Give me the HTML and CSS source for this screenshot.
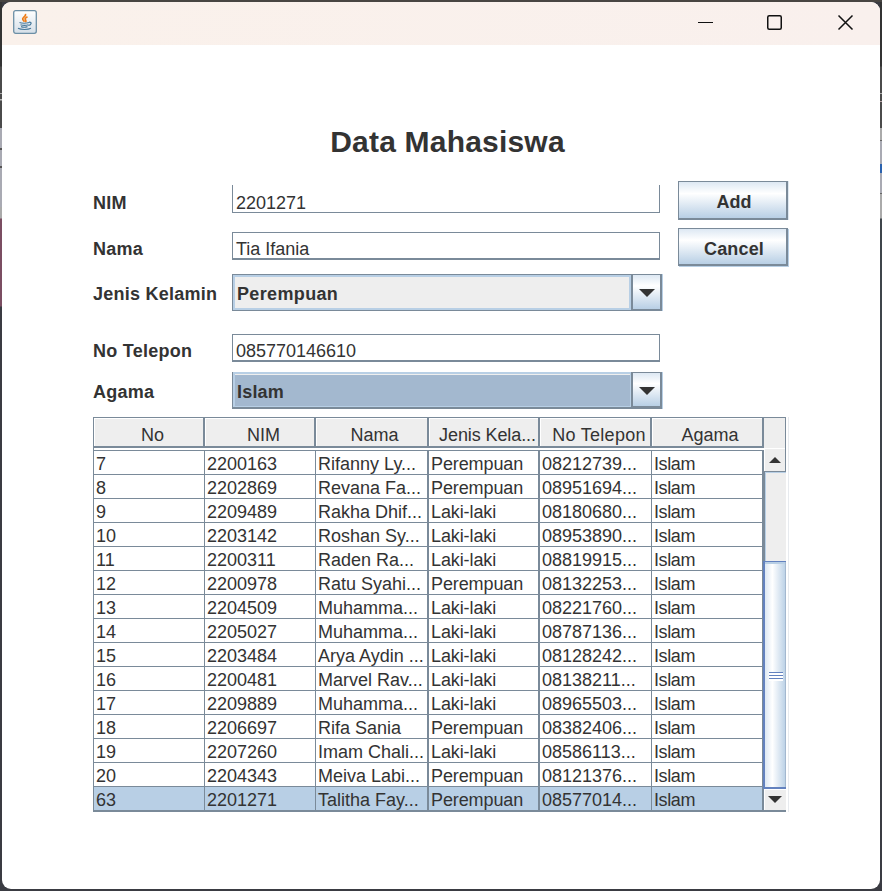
FILE: index.html
```html
<!DOCTYPE html>
<html lang="id">
<head>
<meta charset="utf-8">
<title>Data Mahasiswa</title>
<link rel="stylesheet" href="styles.css">
</head>
<body>
<div class="window">
  <header class="titlebar">
    <svg class="java" width="24" height="24" viewBox="0 0 24 24" fill="none">
      <defs><linearGradient id="tile" x1="0" y1="0" x2="0" y2="1"><stop offset="0" stop-color="#fff"/><stop offset="1" stop-color="#d5dfe8"/></linearGradient></defs>
      <rect x=".7" y=".7" width="22.6" height="22.6" rx="2" fill="url(#tile)" stroke="#6c8fa6" stroke-width="1.3"/>
      <path d="M12.3 4c1.500 2.300-3.800 3.300-2.500 5.500l1.700 2.300M14.500 6.800c-3.300 1.700-2.500 2.300-1.700 3.500.4.7 0 1.300-.5 1.700" stroke="#ee7d18" stroke-width="1.700"/>
      <path d="M6.500 12.500c2 1 7 1 9.500 0M7.500 14.800c2.300.8 5.500.8 8 0M8 16.600c2 .8 4.500.8 6.500 0M16 12.300c3.300-.7 2.500 2.700-.5 3.200M5 18.300c3 1.600 10 1.600 13 0" stroke="#497a9c" stroke-width="1.200"/>
    </svg>
    <svg class="controls" width="160" height="18" viewBox="0 0 160 18" fill="none" stroke="#111" stroke-width="1.500">
      <path d="M0 9.500h15" stroke-width="1"/>
      <rect x="69.750" y="2.750" width="13.500" height="13.500" rx="1.500"/>
      <path d="M140.500 2.500l14 14M154.500 2.500l-14 14"/>
    </svg>
  </header>
  <main class="content">
    <h1>Data Mahasiswa</h1>
    <div class="form">
      <label>NIM</label><div class="field first">2201271</div><button>Add</button>
      <label>Nama</label><div class="field">Tia Ifania</div><button class="cancel">Cancel</button>
      <label class="tight">Jenis Kelamin</label><div class="combo"><span>Perempuan</span><i><svg width="16" height="8"><path d="M0 0h16l-8 8z"/></svg></i></div><b></b>
      <label>No Telepon</label><div class="field">085770146610</div><b></b>
      <label class="agama">Agama</label><div class="combo active"><span>Islam</span><i><svg width="16" height="8"><path d="M0 0h16l-8 8z"/></svg></i></div><b></b>
    </div>
    <div class="pane">
      <div class="table">
        <div class="row head"><span>No</span><span>NIM</span><span>Nama</span><span>Jenis Kela...</span><span>No Telepon</span><span>Agama</span></div>
        <div class="row"><span>7</span><span>2200163</span><span>Rifanny Ly...</span><span>Perempuan</span><span>08212739...</span><span>Islam</span></div>
        <div class="row"><span>8</span><span>2202869</span><span>Revana Fa...</span><span>Perempuan</span><span>08951694...</span><span>Islam</span></div>
        <div class="row"><span>9</span><span>2209489</span><span>Rakha Dhif...</span><span>Laki-laki</span><span>08180680...</span><span>Islam</span></div>
        <div class="row"><span>10</span><span>2203142</span><span>Roshan Sy...</span><span>Laki-laki</span><span>08953890...</span><span>Islam</span></div>
        <div class="row"><span>11</span><span>2200311</span><span>Raden Ra...</span><span>Laki-laki</span><span>08819915...</span><span>Islam</span></div>
        <div class="row"><span>12</span><span>2200978</span><span>Ratu Syahi...</span><span>Perempuan</span><span>08132253...</span><span>Islam</span></div>
        <div class="row"><span>13</span><span>2204509</span><span>Muhamma...</span><span>Laki-laki</span><span>08221760...</span><span>Islam</span></div>
        <div class="row"><span>14</span><span>2205027</span><span>Muhamma...</span><span>Laki-laki</span><span>08787136...</span><span>Islam</span></div>
        <div class="row"><span>15</span><span>2203484</span><span>Arya Aydin ...</span><span>Laki-laki</span><span>08128242...</span><span>Islam</span></div>
        <div class="row"><span>16</span><span>2200481</span><span>Marvel Rav...</span><span>Laki-laki</span><span>08138211...</span><span>Islam</span></div>
        <div class="row"><span>17</span><span>2209889</span><span>Muhamma...</span><span>Laki-laki</span><span>08965503...</span><span>Islam</span></div>
        <div class="row"><span>18</span><span>2206697</span><span>Rifa Sania</span><span>Perempuan</span><span>08382406...</span><span>Islam</span></div>
        <div class="row"><span>19</span><span>2207260</span><span>Imam Chali...</span><span>Laki-laki</span><span>08586113...</span><span>Islam</span></div>
        <div class="row"><span>20</span><span>2204343</span><span>Meiva Labi...</span><span>Perempuan</span><span>08121376...</span><span>Islam</span></div>
        <div class="row selected"><span>63</span><span>2201271</span><span>Talitha Fay...</span><span>Perempuan</span><span>08577014...</span><span>Islam</span></div>
      </div>
      <div class="scroll">
        <div class="corner"></div>
        <div class="arrow up"><svg width="12" height="6"><path d="M0 6l6-6 6 6z"/></svg></div>
        <div class="track"></div>
        <div class="thumb"><div class="grip"></div></div>
        <div class="arrow down"><svg width="14" height="7"><path d="M0 0h14l-7 7z"/></svg></div>
      </div>
    </div>
  </main>
</div>
</body>
</html>
```
FILE: styles.css
```css
* { box-sizing: border-box; }
html { background: #3a3b42; }
body {
  margin: 0;
  padding: 2px;
  width: 882px;
  height: 891px;
  overflow: hidden;
  font: 18px/24px "Liberation Sans", Arial, sans-serif;
  color: #333;
  background:
    linear-gradient(#484542, #484542) 0 0 / 100% 2px no-repeat,
    linear-gradient(#333 66px, #4b4b4b 67px 93px, #aaa 93px 94px, #4b4b4b 94px 99px, #bbb 99px 100px, #4b4b4b 101px 128px, #a9aab3 128px 148px, #555 148px 150px, #a9aab3 150px 166px, #555 166px 168px, #a9aab3 168px 207px, #aaa 207px 218px, #7b4e62 219px 306px, #3a3b42 307px) 0 0 / 2px 100% no-repeat,
    linear-gradient(#333 66px, #4b4b4b 67px 93px, #aaa 93px 94px, #4b4b4b 94px 101px, #b9a5a8 101px 102px, #4b4b4b 102px 128px, #aaa 128px 140px, #666 140px 141px, #a9aab3 141px 164px, #2b62ae 164px 173px, #a9aab3 173px 193px, #666 193px 194px, #aaa 194px 218px, #3f454b 219px 310px, #3a3b42) 100% 0 / 2px 100% no-repeat,
    #3a3b42;
}
.window {
  height: 887px;
  background: #fff;
  border-radius: 9px;
  overflow: hidden;
}
.titlebar {
  height: 43px;
  background: linear-gradient(90deg, #faf1eb, #f9f0ed);
  display: flex;
  justify-content: space-between;
  padding: 8px 22px 0 11px;
}
.controls { margin: 3px 0 0; }
.content { padding: 0 0 0 91px; }
h1 {
  margin: 0;
  padding-top: 79px;
  width: 709px;
  height: 136px;
  text-align: center;
  font-size: 30px;
  line-height: 36px;
  letter-spacing: .2px;
}
.form {
  display: grid;
  grid-template-columns: 139px 446px 111px;
  grid-template-rows: 47px 46px 60px 38px 45px;
}
label {
  font-weight: bold;
  letter-spacing: .25px;
  padding-top: 10px;
}
.form label:nth-of-type(2) { padding-top: 9px; }
label.tight { padding-top: 8px; }
.form label:nth-of-type(4) { padding-top: 5px; }
label.agama { padding-top: 8px; }
.field {
  width: 428px;
  height: 28px;
  margin-top: 4px;
  padding: 4px 3px 0;
  border: 1px solid #7a8a99;
  border-bottom-width: 2px;
}
.form .field:nth-of-type(4) { margin-top: 0; }
.field.first { border-top: 0; border-bottom-width: 1px; padding-top: 6px; }
button {
  width: 110px;
  height: 39px;
  padding: 5px 0 0 3px;
  font: bold 18px "Liberation Sans", Arial, sans-serif;
  color: #333;
  border: 1px solid #7a8a99;
  border-right: 2px solid #7a8a99;
  border-bottom: 2px solid #7a8a99;
  box-shadow: 1px 0 #dfe9f2;
  background: linear-gradient(#dde8f3, #fff 32%, #b8cfe5);
}
button.cancel { box-shadow: 1px 1px #b8cfe5; height: 38px; letter-spacing: .15px; }
.combo {
  display: flex;
  width: 430px;
  height: 37px;
  border: 1px solid #7a8a99;
  box-shadow: 1px 0 #b8cfe5;
}
.combo span {
  flex: 1;
  font-weight: bold;
  letter-spacing: .35px;
  border: 2px solid #b8cfe5;
  background: #eee;
  padding: 5px 2px 0;
}
.combo i {
  width: 30px;
  border: solid #7a8a99;
  border-width: 0 1px 1px 2px;
  background: linear-gradient(#dde8f3, #fff 32%, #b8cfe5);
  display: flex;
  align-items: center;
  justify-content: center;
  padding: 2px 0 0 1px;
}
.combo path, .arrow path { fill: #333; }
.combo.active { border-bottom-width: 2px; }
.combo.active span {
  margin-top: -1px;
  background: #a3b8cf;
  border-width: 2px 1px 1px 2px;
  box-shadow: inset 0 1px #eee;
  padding-top: 6px;
  letter-spacing: .2px;
}
.pane {
  display: flex;
  width: 696px;
  height: 395px;
  border-right: 1px solid #e7eaee;
}
.table {
  width: 671px;
  border: 1px solid #7a8a99;
  border-width: 1px 0 1px 1px;
  height: 395px;
}
.row {
  display: grid;
  grid-template-columns: 111px 111px 113px 111px 112px 112px;
  height: 24px;
}
.row span {
  border-right: 1px solid #7a8a99;
  border-bottom: 1px solid #7a8a99;
  padding-left: 2px;
  line-height: 26px;
  height: 24px;
  white-space: nowrap;
}
.row span:nth-child(3), .row span:nth-child(4), .row span:nth-child(6) { border-right-width: 2px; }
.row:not(.head) span:nth-child(4) { letter-spacing: -.1px; }
.row:not(.head) span:nth-child(6) { letter-spacing: -.4px; }
.head { height: 33px; border-bottom: 1px solid #7a8a99; }
.row.head span {
  height: 30px;
  line-height: 34px;
  text-align: center;
  padding-left: 8px;
  background: #eee;
  border-right-width: 2px;
  border-bottom-width: 2px;
  box-shadow: inset 1px 1px #fff;
}
.row.head span:nth-child(3), .row.head span:nth-child(6) { padding-left: 6px; }
.row.head span:nth-child(4) { letter-spacing: -.1px; }
.row.head span:nth-child(5) { letter-spacing: .3px; }
.selected { background: #b8cfe5; }
.scroll {
  width: 22px;
  border-top: 1px solid #7a8a99;
  border-bottom: 2px solid #7a8a99;
}
.corner { height: 30px; background: #eee; border-right: 1px solid #7a8a99; }
.arrow {
  display: flex;
  align-items: center;
  justify-content: center;
  background: #eee;
  box-shadow: inset 1px 1px #fff;
}
.up { height: 24px; border-right: 1px solid #7a8a99; border-bottom: 1px solid #7a8a99; }
.track { height: 89px; background: #eee; border: solid #b8cfe5; border-width: 1px 0 0 1px; margin-left: 1px; box-shadow: -1px 0 #7a8a99; }
.thumb {
  position: relative;
  height: 228px;
  margin-left: -1px;
  border: solid #6382bf;
  border-width: 1px 0 2px 2px;
  box-shadow: inset -1px 0 #a3b8cf, inset 0 2px #b8cfe5;
  background: linear-gradient(90deg, #dde8f3, #fff 35%, #b8cfe5);
  padding: 110px 0 0 4px;
}
.grip { width: 14px; height: 9px; background: repeating-linear-gradient(#6382bf 0 1px, #fff 1px 3px); }
.down { height: 21px; }
```
